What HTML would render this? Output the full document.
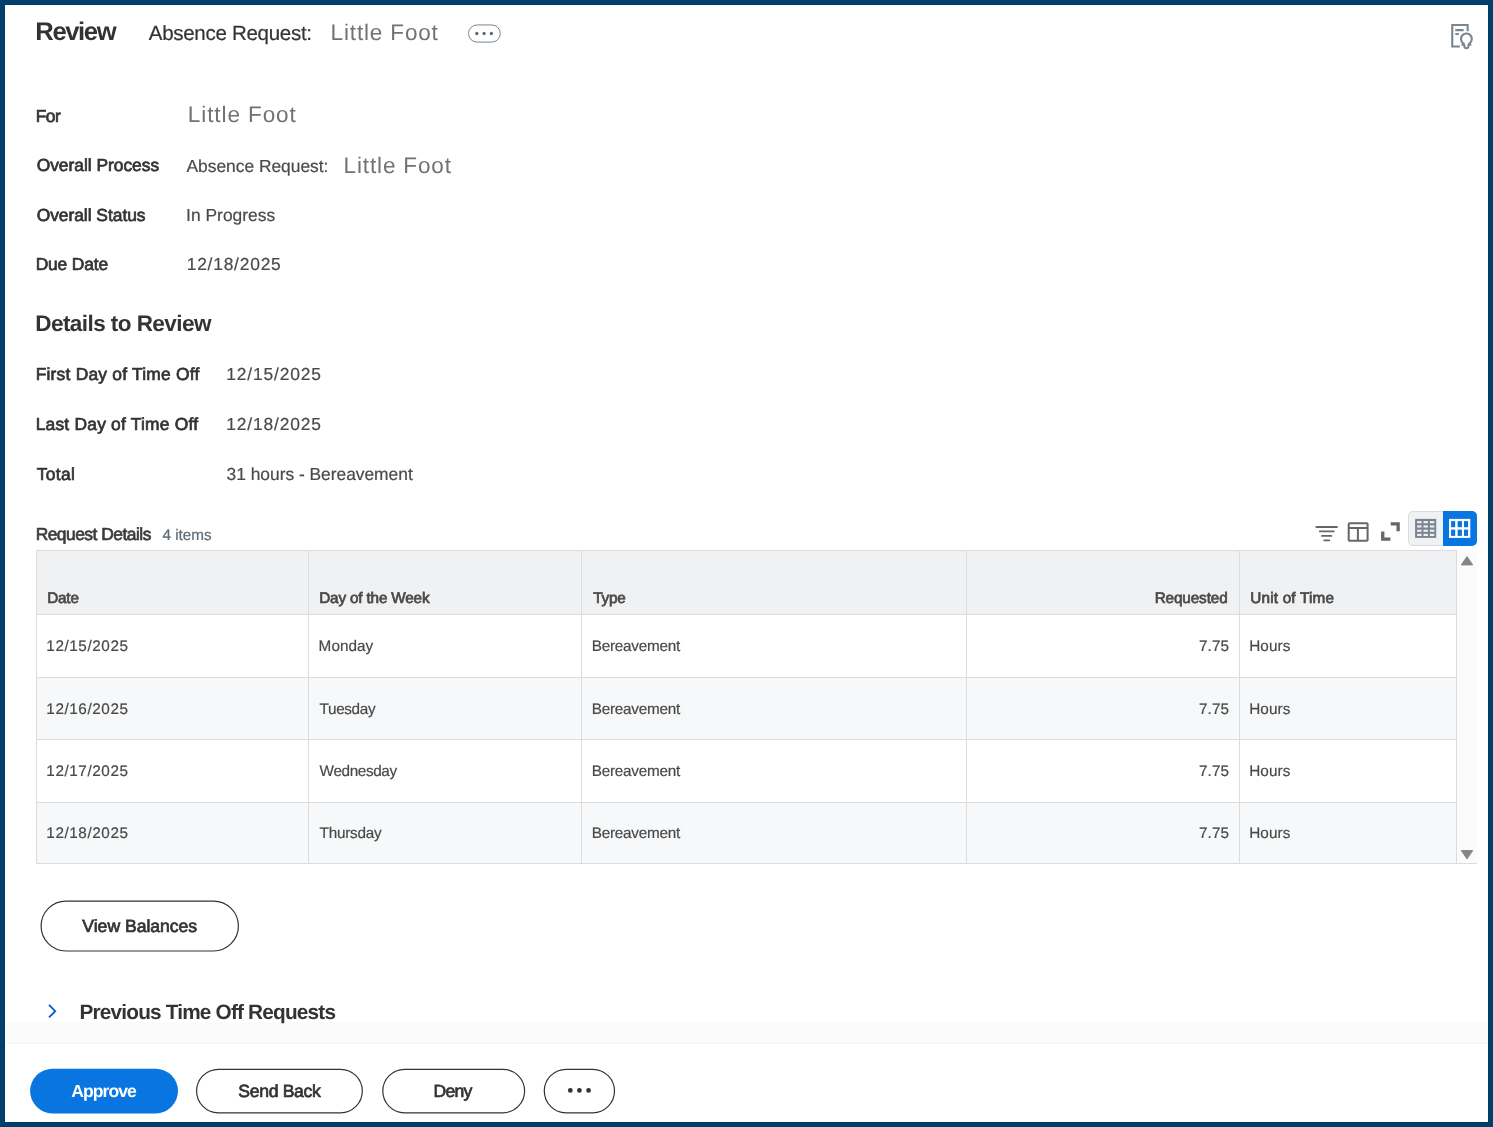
<!DOCTYPE html>
<html lang="en"><head><meta charset="utf-8"><title>Review Absence Request</title>
<style>
html,body{margin:0;padding:0;}
body{width:1493px;height:1127px;overflow:hidden;background:#00406b;font-family:"Liberation Sans",sans-serif;}
#frame{position:absolute;left:0;top:0;width:1493px;height:1127px;overflow:hidden;}
#page{position:absolute;left:5px;top:5px;width:1483px;height:1117px;background:#ffffff;box-shadow:0 0 0 1px #003a62;}
.t{position:absolute;will-change:transform;text-rendering:geometricPrecision;line-height:0;white-space:nowrap;margin:0;padding:0;}
.abs{position:absolute;}
.pill{position:absolute;box-sizing:border-box;border:1px solid #333333;border-radius:30px;background:#ffffff;}
svg{position:absolute;overflow:visible;}

</style></head>
<body>
<div id="frame">
<div id="page"></div>
<!-- related actions pill -->
<svg style="left:0;top:0" width="1493" height="1127" viewBox="0 0 1493 1127">
  <rect x="468.5" y="24.95" width="31.8" height="17.15" rx="8.57" fill="#ffffff" stroke="#7b858f" stroke-width="1"/>
  <g fill="#5e6a75"><circle cx="476.8" cy="33.5" r="1.65"/><circle cx="484.1" cy="33.5" r="1.65"/><circle cx="491.4" cy="33.5" r="1.65"/></g>
  <!-- top-right doc/bulb icon -->
  <g fill="none" stroke="#7b858f" stroke-width="2.1">
    <path d="M1467.65 31.3 V24.95 H1452.25 V46.55 H1459.9"/>
    <path d="M1455.3 30.15 H1463.6 M1455.3 34 H1458.8"/>
    <path d="M1464.5 44.7 L1463.2 43.3 A5.4 5.4 0 1 1 1469.6 43.3 L1468.3 44.7 M1461.5 44.7 H1464.5 M1468.3 44.7 H1471.3 M1464.4 44.7 V46.2 A2 2 0 0 0 1468.4 46.2 V44.7"/>
  </g>
  <!-- filter icon -->
  <g stroke="#666666" stroke-width="1.8" stroke-linecap="round">
    <path d="M1316.3 527 H1337 M1319.8 531.45 H1333.7 M1322 535.9 H1331.3 M1324.2 540.4 H1329.2"/>
  </g>
  <!-- layout icon -->
  <g fill="none" stroke="#666666" stroke-width="2">
    <rect x="1348.7" y="523.2" width="18.9" height="17.6" rx="0.8"/>
    <path d="M1348.7 528 H1367.6 M1357.9 528 V540.8"/>
  </g>
  <!-- expand icon -->
  <g fill="#666666">
    <path d="M1390.7 522.2 H1399.8 V531.3 H1396.5 V525.5 H1390.7 Z"/>
    <path d="M1381.1 531.6 H1384.4 V537.5 H1390.4 V540.8 H1381.1 Z"/>
  </g>
</svg>
<!-- toggle -->
<div class="abs" style="left:1408px;top:511px;width:35px;height:35.3px;box-sizing:border-box;background:#f0f1f2;border:1px solid #d9dde2;border-right:none;border-radius:5px 0 0 5px"></div>
<div class="abs" style="left:1442.5px;top:511px;width:34.5px;height:35.3px;background:#0875e1;border-radius:0 5px 5px 0"></div>
<svg style="left:0;top:0" width="1493" height="1127" viewBox="0 0 1493 1127">
  <rect x="1415.1" y="518.9" width="21.1" height="19" fill="#7b858f"/>
  <g fill="#f0f1f2">
    <rect x="1417.1" y="521.1" width="4.4" height="2.1"/><rect x="1423.5" y="521.1" width="4.4" height="2.1"/><rect x="1429.9" y="521.1" width="4.4" height="2.1"/>
    <rect x="1417.1" y="525.4" width="4.4" height="2.1"/><rect x="1423.5" y="525.4" width="4.4" height="2.1"/><rect x="1429.9" y="525.4" width="4.4" height="2.1"/>
    <rect x="1417.1" y="529.7" width="4.4" height="2.1"/><rect x="1423.5" y="529.7" width="4.4" height="2.1"/><rect x="1429.9" y="529.7" width="4.4" height="2.1"/>
    <rect x="1417.1" y="533.9" width="4.4" height="2.1"/><rect x="1423.5" y="533.9" width="4.4" height="2.1"/><rect x="1429.9" y="533.9" width="4.4" height="2.1"/>
  </g>
  <rect x="1449" y="518.9" width="21.3" height="19" fill="#ffffff"/>
  <g fill="#0875e1">
    <rect x="1451.1" y="521.1" width="4.1" height="6.1"/><rect x="1457.6" y="521.1" width="4.3" height="6.1"/><rect x="1464" y="521.1" width="4.1" height="6.1"/>
    <rect x="1451.1" y="529.6" width="4.1" height="6.3"/><rect x="1457.6" y="529.6" width="4.3" height="6.3"/><rect x="1464" y="529.6" width="4.1" height="6.3"/>
  </g>
</svg>
<!-- table -->
<div class="abs" style="left:36px;top:551px;width:1441px;height:313px;background:#fbfbfb"></div>
<div class="abs" style="left:36px;top:551px;width:1421px;height:313px;background:#ffffff"></div>
<div class="abs" style="left:36px;top:551px;width:1421px;height:64px;background:#f0f1f2"></div>
<div class="abs" style="left:36px;top:678px;width:1421px;height:62px;background:#f7f8f9"></div>
<div class="abs" style="left:36px;top:803px;width:1421px;height:61px;background:#f7f8f9"></div>
<!-- grid lines -->
<div class="abs gl" style="left:36px;top:550px;width:1421px;height:1px;background:#dcdcdc"></div>
<div class="abs gl" style="left:36px;top:614.3px;width:1421px;height:1px;background:#dcdcdc"></div>
<div class="abs gl" style="left:36px;top:677px;width:1421px;height:1px;background:#dcdcdc"></div>
<div class="abs gl" style="left:36px;top:739.3px;width:1421px;height:1px;background:#dcdcdc"></div>
<div class="abs gl" style="left:36px;top:802px;width:1421px;height:1px;background:#dcdcdc"></div>
<div class="abs gl" style="left:36px;top:863.3px;width:1441px;height:1px;background:#dcdcdc"></div>
<div class="abs gl" style="left:35.7px;top:551px;width:1px;height:313px;background:#dcdcdc"></div>
<div class="abs gl" style="left:307.5px;top:551px;width:1px;height:313px;background:#dcdcdc"></div>
<div class="abs gl" style="left:580.8px;top:551px;width:1px;height:313px;background:#dcdcdc"></div>
<div class="abs gl" style="left:965.9px;top:551px;width:1px;height:313px;background:#dcdcdc"></div>
<div class="abs gl" style="left:1238.8px;top:551px;width:1px;height:313px;background:#dcdcdc"></div>
<div class="abs gl" style="left:1456px;top:551px;width:1px;height:313px;background:#dcdcdc"></div>
<svg style="left:0;top:0" width="1493" height="1127" viewBox="0 0 1493 1127">
  <path d="M1467 556.6 L1472.7 564.9 H1461.3 Z" fill="#858585" stroke="#858585" stroke-width="1" stroke-linejoin="round"/>
  <path d="M1467 858.9 L1472.7 850.6 H1461.3 Z" fill="#858585" stroke="#858585" stroke-width="1" stroke-linejoin="round"/>
  <!-- chevron -->
  <path d="M49.0 1004.9 L55.2 1011.15 L49.0 1017.4" fill="none" stroke="#0b62c4" stroke-width="1.9"/>
</svg>
<!-- view balances -->
<!-- footer shade -->
<div class="abs" style="left:6px;top:1022px;width:1482px;height:21px;background:#fbfbfb"></div>
<div class="abs" style="left:6px;top:1043px;width:1482px;height:1px;background:#f6f6f6"></div>
<!-- footer buttons -->
<svg style="left:0;top:0" width="1493" height="1127" viewBox="0 0 1493 1127">
  <rect x="41.10" y="901.10" width="197.30" height="49.90" rx="24.95" fill="#ffffff" stroke="#333333" stroke-width="1.2"/>
  <rect x="30.1" y="1068.7" width="147.9" height="44.7" rx="22.35" fill="#0875e1"/>
  <rect x="196.60" y="1069.30" width="165.70" height="43.50" rx="21.75" fill="#ffffff" stroke="#333333" stroke-width="1.2"/>
  <rect x="382.80" y="1069.30" width="141.80" height="43.50" rx="21.75" fill="#ffffff" stroke="#333333" stroke-width="1.2"/>
  <rect x="544.30" y="1069.30" width="70.20" height="43.50" rx="21.75" fill="#ffffff" stroke="#333333" stroke-width="1.2"/>
</svg>
<svg style="left:0;top:0" width="1493" height="1127" viewBox="0 0 1493 1127">
  <g fill="#333333"><circle cx="570.3" cy="1090.4" r="2.4"/><circle cx="579.4" cy="1090.4" r="2.4"/><circle cx="588.6" cy="1090.4" r="2.4"/></g>
</svg>

<div class="t" id="t_review" style="left:35px;padding-left:0.30px;top:32.00px;font-size:25.6px;font-weight:700;color:#333333;letter-spacing:-1.379px">Review</div>
<div class="t" id="t_absreq" style="left:148px;padding-left:0.80px;top:34.00px;font-size:20.5px;font-weight:400;color:#333333;-webkit-text-stroke:0.2px #333333;letter-spacing:-0.289px">Absence Request:</div>
<div class="t" id="t_lf1" style="left:330px;padding-left:0.60px;top:33.02px;font-size:22.5px;font-weight:400;color:#727272;letter-spacing:0.845px">Little Foot</div>
<div class="t" id="l_for" style="left:35px;padding-left:0.65px;top:116.00px;font-size:17.4px;font-weight:400;color:#333333;-webkit-text-stroke:0.7px #333333;letter-spacing:-0.447px">For</div>
<div class="t" id="t_lf2" style="left:187px;padding-left:0.80px;top:115.01px;font-size:22.5px;font-weight:400;color:#727272;letter-spacing:0.915px">Little Foot</div>
<div class="t" id="l_op" style="left:36px;padding-left:0.65px;top:165.01px;font-size:17.4px;font-weight:400;color:#333333;-webkit-text-stroke:0.7px #333333;letter-spacing:-0.017px">Overall Process</div>
<div class="t" id="v_op" style="left:186px;padding-left:0.50px;top:166.01px;font-size:17.4px;font-weight:400;color:#4a4a4a;-webkit-text-stroke:0.2px #4a4a4a;letter-spacing:-0.012px">Absence Request:</div>
<div class="t" id="t_lf3" style="left:343px;padding-left:0.60px;top:166.02px;font-size:22.5px;font-weight:400;color:#727272;letter-spacing:0.855px">Little Foot</div>
<div class="t" id="l_os" style="left:36px;padding-left:0.65px;top:215.01px;font-size:17.4px;font-weight:400;color:#333333;-webkit-text-stroke:0.7px #333333;letter-spacing:-0.025px">Overall Status</div>
<div class="t" id="v_os" style="left:186px;padding-left:0.10px;top:215.01px;font-size:17.4px;font-weight:400;color:#4a4a4a;-webkit-text-stroke:0.2px #4a4a4a;letter-spacing:0.017px">In Progress</div>
<div class="t" id="l_dd" style="left:35px;padding-left:0.65px;top:264.00px;font-size:17.4px;font-weight:400;color:#333333;-webkit-text-stroke:0.7px #333333;letter-spacing:-0.142px">Due Date</div>
<div class="t" id="v_dd" style="left:186px;padding-left:0.70px;top:264.00px;font-size:17.4px;font-weight:400;color:#4a4a4a;-webkit-text-stroke:0.2px #4a4a4a;letter-spacing:0.782px">12/18/2025</div>
<div class="t" id="h_det" style="left:35px;padding-left:0.30px;top:324.02px;font-size:22.5px;font-weight:700;color:#333333;letter-spacing:-0.560px">Details to Review</div>
<div class="t" id="l_fd" style="left:35px;padding-left:0.65px;top:374.01px;font-size:17.4px;font-weight:400;color:#333333;-webkit-text-stroke:0.7px #333333;letter-spacing:0.225px">First Day of Time Off</div>
<div class="t" id="v_fd" style="left:226px;padding-left:0.20px;top:374.01px;font-size:17.4px;font-weight:400;color:#4a4a4a;-webkit-text-stroke:0.2px #4a4a4a;letter-spacing:0.859px">12/15/2025</div>
<div class="t" id="l_ld" style="left:35px;padding-left:0.65px;top:424.01px;font-size:17.4px;font-weight:400;color:#333333;-webkit-text-stroke:0.7px #333333;letter-spacing:0.223px">Last Day of Time Off</div>
<div class="t" id="v_ld" style="left:226px;padding-left:0.20px;top:424.01px;font-size:17.4px;font-weight:400;color:#4a4a4a;-webkit-text-stroke:0.2px #4a4a4a;letter-spacing:0.859px">12/18/2025</div>
<div class="t" id="l_tot" style="left:36px;padding-left:0.65px;top:474.01px;font-size:17.4px;font-weight:400;color:#333333;-webkit-text-stroke:0.7px #333333;letter-spacing:0.358px">Total</div>
<div class="t" id="v_tot" style="left:226px;padding-left:0.60px;top:474.01px;font-size:17.4px;font-weight:400;color:#4a4a4a;-webkit-text-stroke:0.2px #4a4a4a;letter-spacing:-0.021px">31 hours - Bereavement</div>
<div class="t" id="l_rd" style="left:35px;padding-left:0.65px;top:534.01px;font-size:17.4px;font-weight:400;color:#3c3c3c;-webkit-text-stroke:0.7px #3c3c3c;letter-spacing:-0.505px">Request Details</div>
<div class="t" id="v_items" style="left:162px;padding-left:0.50px;top:536.00px;font-size:15.3px;font-weight:400;color:#5e6a75;-webkit-text-stroke:0.2px #5e6a75;letter-spacing:-0.043px">4 items</div>
<div class="t" id="th1" style="left:47px;padding-left:0.15px;top:599.01px;font-size:15.3px;font-weight:400;color:#494949;-webkit-text-stroke:0.7px #494949;letter-spacing:-0.168px">Date</div>
<div class="t" id="th2" style="left:319px;padding-left:0.25px;top:599.01px;font-size:15.3px;font-weight:400;color:#494949;-webkit-text-stroke:0.7px #494949;letter-spacing:-0.175px">Day of the Week</div>
<div class="t" id="b_view" style="left:82px;padding-left:0.35px;top:926.01px;font-size:17.6px;font-weight:400;color:#333333;-webkit-text-stroke:0.7px #333333;letter-spacing:-0.024px">View Balances</div>
<div class="t" id="h_prev" style="left:79px;padding-left:0.50px;top:1013.01px;font-size:20.8px;font-weight:700;color:#333333;letter-spacing:-0.821px">Previous Time Off Requests</div>
<div class="t" id="b_app" style="left:71px;padding-left:0.20px;top:1091.01px;font-size:17.6px;font-weight:700;color:#ffffff;letter-spacing:-0.963px">Approve</div>
<div class="t" id="b_send" style="left:238px;padding-left:0.35px;top:1091.01px;font-size:17.6px;font-weight:400;color:#333333;-webkit-text-stroke:0.7px #333333;letter-spacing:-0.324px">Send Back</div>
<div class="t" id="b_deny" style="left:433px;padding-left:0.45px;top:1091.01px;font-size:17.6px;font-weight:400;color:#333333;-webkit-text-stroke:0.7px #333333;letter-spacing:-0.725px">Deny</div>
<div class="t" id="th3" style="left:593px;padding-left:0.25px;top:599.01px;font-size:15.3px;font-weight:400;color:#494949;-webkit-text-stroke:0.7px #494949;letter-spacing:-0.185px">Type</div>
<div class="t" id="th4" style="left:1154px;padding-left:0.65px;top:599.01px;font-size:15.3px;font-weight:400;color:#494949;-webkit-text-stroke:0.7px #494949;letter-spacing:-0.123px">Requested</div>
<div class="t" id="th5" style="left:1250px;padding-left:0.25px;top:599.01px;font-size:15.3px;font-weight:400;color:#494949;-webkit-text-stroke:0.7px #494949;letter-spacing:0.191px">Unit of Time</div>
<div class="t" id="d0" style="left:46px;padding-left:0.30px;top:647.01px;font-size:15.3px;font-weight:400;color:#494949;-webkit-text-stroke:0.2px #494949;letter-spacing:0.572px">12/15/2025</div>
<div class="t" id="w0" style="left:318px;padding-left:0.60px;top:647.01px;font-size:15.3px;font-weight:400;color:#494949;-webkit-text-stroke:0.2px #494949;letter-spacing:0.046px">Monday</div>
<div class="t" id="y0" style="left:591px;padding-left:0.70px;top:647.01px;font-size:15.3px;font-weight:400;color:#494949;-webkit-text-stroke:0.2px #494949;letter-spacing:-0.233px">Bereavement</div>
<div class="t" id="q0" style="left:1198px;padding-left:1.00px;top:647.01px;font-size:15.3px;font-weight:400;color:#494949;-webkit-text-stroke:0.2px #494949;letter-spacing:0.078px">7.75</div>
<div class="t" id="u0" style="left:1249px;padding-left:0.20px;top:647.01px;font-size:15.3px;font-weight:400;color:#494949;-webkit-text-stroke:0.2px #494949;letter-spacing:0.086px">Hours</div>
<div class="t" id="d1" style="left:46px;padding-left:0.30px;top:710.00px;font-size:15.3px;font-weight:400;color:#494949;-webkit-text-stroke:0.2px #494949;letter-spacing:0.572px">12/16/2025</div>
<div class="t" id="w1" style="left:319px;padding-left:0.60px;top:710.00px;font-size:15.3px;font-weight:400;color:#494949;-webkit-text-stroke:0.2px #494949;letter-spacing:-0.359px">Tuesday</div>
<div class="t" id="y1" style="left:591px;padding-left:0.70px;top:710.00px;font-size:15.3px;font-weight:400;color:#494949;-webkit-text-stroke:0.2px #494949;letter-spacing:-0.233px">Bereavement</div>
<div class="t" id="q1" style="left:1198px;padding-left:1.00px;top:710.00px;font-size:15.3px;font-weight:400;color:#494949;-webkit-text-stroke:0.2px #494949;letter-spacing:0.078px">7.75</div>
<div class="t" id="u1" style="left:1249px;padding-left:0.20px;top:710.00px;font-size:15.3px;font-weight:400;color:#494949;-webkit-text-stroke:0.2px #494949;letter-spacing:0.086px">Hours</div>
<div class="t" id="d2" style="left:46px;padding-left:0.30px;top:772.01px;font-size:15.3px;font-weight:400;color:#494949;-webkit-text-stroke:0.2px #494949;letter-spacing:0.572px">12/17/2025</div>
<div class="t" id="w2" style="left:319px;padding-left:0.60px;top:772.01px;font-size:15.3px;font-weight:400;color:#494949;-webkit-text-stroke:0.2px #494949;letter-spacing:-0.369px">Wednesday</div>
<div class="t" id="y2" style="left:591px;padding-left:0.70px;top:772.01px;font-size:15.3px;font-weight:400;color:#494949;-webkit-text-stroke:0.2px #494949;letter-spacing:-0.233px">Bereavement</div>
<div class="t" id="q2" style="left:1198px;padding-left:1.00px;top:772.01px;font-size:15.3px;font-weight:400;color:#494949;-webkit-text-stroke:0.2px #494949;letter-spacing:0.078px">7.75</div>
<div class="t" id="u2" style="left:1249px;padding-left:0.20px;top:772.01px;font-size:15.3px;font-weight:400;color:#494949;-webkit-text-stroke:0.2px #494949;letter-spacing:0.086px">Hours</div>
<div class="t" id="d3" style="left:46px;padding-left:0.30px;top:834.00px;font-size:15.3px;font-weight:400;color:#494949;-webkit-text-stroke:0.2px #494949;letter-spacing:0.572px">12/18/2025</div>
<div class="t" id="w3" style="left:319px;padding-left:0.60px;top:834.00px;font-size:15.3px;font-weight:400;color:#494949;-webkit-text-stroke:0.2px #494949;letter-spacing:-0.245px">Thursday</div>
<div class="t" id="y3" style="left:591px;padding-left:0.70px;top:834.00px;font-size:15.3px;font-weight:400;color:#494949;-webkit-text-stroke:0.2px #494949;letter-spacing:-0.233px">Bereavement</div>
<div class="t" id="q3" style="left:1198px;padding-left:1.00px;top:834.00px;font-size:15.3px;font-weight:400;color:#494949;-webkit-text-stroke:0.2px #494949;letter-spacing:0.078px">7.75</div>
<div class="t" id="u3" style="left:1249px;padding-left:0.20px;top:834.00px;font-size:15.3px;font-weight:400;color:#494949;-webkit-text-stroke:0.2px #494949;letter-spacing:0.086px">Hours</div>
</div>
</body></html>
